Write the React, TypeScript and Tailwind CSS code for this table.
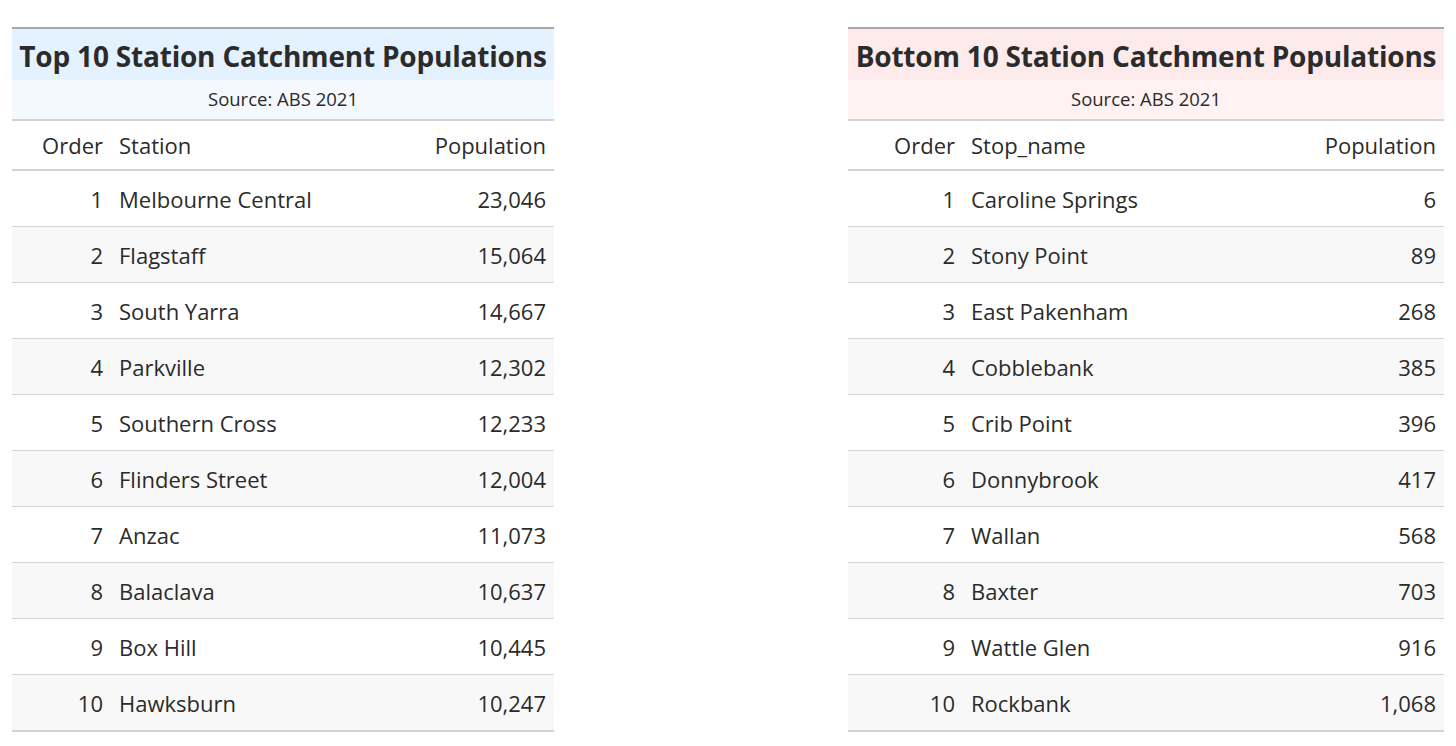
type Row = { order: number; name: string; pop: string };

const top10: Row[] = [
  { order: 1, name: "Melbourne Central", pop: "23,046" },
  { order: 2, name: "Flagstaff", pop: "15,064" },
  { order: 3, name: "South Yarra", pop: "14,667" },
  { order: 4, name: "Parkville", pop: "12,302" },
  { order: 5, name: "Southern Cross", pop: "12,233" },
  { order: 6, name: "Flinders Street", pop: "12,004" },
  { order: 7, name: "Anzac", pop: "11,073" },
  { order: 8, name: "Balaclava", pop: "10,637" },
  { order: 9, name: "Box Hill", pop: "10,445" },
  { order: 10, name: "Hawksburn", pop: "10,247" },
];

const bottom10: Row[] = [
  { order: 1, name: "Caroline Springs", pop: "6" },
  { order: 2, name: "Stony Point", pop: "89" },
  { order: 3, name: "East Pakenham", pop: "268" },
  { order: 4, name: "Cobblebank", pop: "385" },
  { order: 5, name: "Crib Point", pop: "396" },
  { order: 6, name: "Donnybrook", pop: "417" },
  { order: 7, name: "Wallan", pop: "568" },
  { order: 8, name: "Baxter", pop: "703" },
  { order: 9, name: "Wattle Glen", pop: "916" },
  { order: 10, name: "Rockbank", pop: "1,068" },
];

interface TableProps {
  title: string;
  nameCol: string;
  rows: Row[];
  className: string;
  gridCols: string;
  titleBg: string;
  subBg: string;
}

function PopTable({ title, nameCol, rows, className, gridCols, titleBg, subBg }: TableProps) {
  return (
    <div className={`${className} border-t-2 border-[#a8a8a8] text-[#2b2b2b]`}>
      <div className={`${titleBg} h-[51px] flex items-end justify-center pb-[10px] text-[28px] font-bold leading-none tracking-[-0.2px]`}>
        {title}
      </div>
      <div className={`${subBg} h-[39px] flex items-center justify-center text-[18.5px] leading-none`}>
        Source: ABS 2021
      </div>
      <div className={`grid ${gridCols} h-[52px] items-center border-y-2 border-[#d3d3d3] text-[22px] pt-[1px]`}>
        <div className="text-right px-[8px]">Order</div>
        <div className="px-[8px]">{nameCol}</div>
        <div className="text-right px-[8px]">Population</div>
      </div>
      {rows.map((r, i) => (
        <div
          key={r.order}
          className={`grid ${gridCols} items-center text-[22px] pt-[2px] ${
            i % 2 === 1 ? "bg-[#f8f8f8]" : "bg-white"
          } ${i === rows.length - 1 ? "h-[57px] border-b-2" : "h-[56px] border-b"} border-[#d3d3d3]`}
        >
          <div className="text-right px-[8px]">{r.order}</div>
          <div className="px-[8px]">{r.name}</div>
          <div className="text-right px-[8px]">{r.pop}</div>
        </div>
      ))}
    </div>
  );
}

export default function App() {
  return (
    <div
      className="flex items-start bg-white w-[1456px] h-[746px] pt-[27px] pl-[12px] gap-[294px]"
      style={{ fontFamily: '"Segoe UI", "Open Sans", "Noto Sans", sans-serif' }}
    >
      <PopTable
        title="Top 10 Station Catchment Populations"
        nameCol="Station"
        rows={top10}
        className="w-[542px]"
        gridCols="grid-cols-[99px_1fr_auto]"
        titleBg="bg-[#e4f1fe]"
        subBg="bg-[#f3f9ff]"
      />
      <PopTable
        title="Bottom 10 Station Catchment Populations"
        nameCol="Stop_name"
        rows={bottom10}
        className="w-[596px]"
        gridCols="grid-cols-[115px_1fr_auto]"
        titleBg="bg-[#fdeaea]"
        subBg="bg-[#fff2f2]"
      />
    </div>
  );
}
